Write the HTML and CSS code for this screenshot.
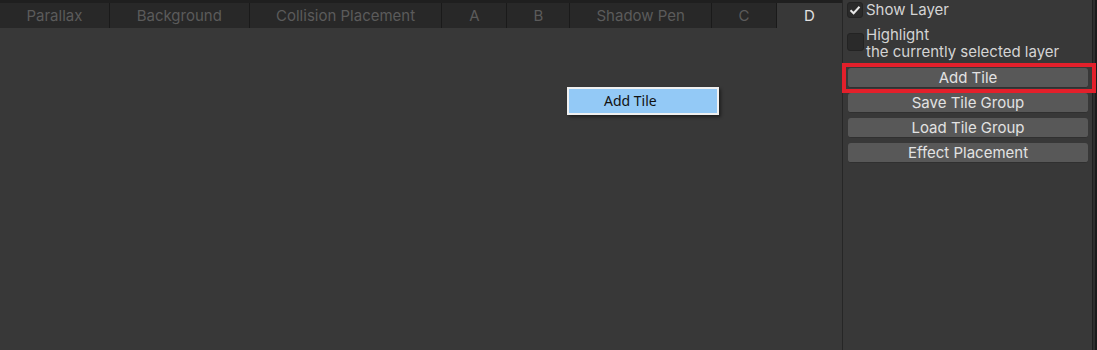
FILE: index.html
```html
<!DOCTYPE html>
<html>
<head>
	<title>Tile Editor</title>
	<link rel="stylesheet" href="styles.css">
</head>
<body>
<div class="window">
	<div class="main">
		<div class="tabs">
			<span class="tab w109">Parallax</span>
			<span class="tab w140">Background</span>
			<span class="tab w193">Collision Placement</span>
			<span class="tab w66">A</span>
			<span class="tab w63">B</span>
			<span class="tab w142">Shadow Pen</span>
			<span class="tab w65">C</span>
			<span class="tab w65 on">D</span>
		</div>
		<div class="canvas">
			<div class="menu">
				<div class="menu-item">Add Tile</div>
			</div>
		</div>
	</div>
	<div class="side">
		<label class="check">
			<span class="box"><svg width="12" height="10" viewBox="0 0 12 10"><path d="M1.5 5.2 L4.6 8.2 L10.5 1.8" fill="none" stroke="#e8e8e8" stroke-width="2"/></svg></span>
			<span class="label">Show Layer</span>
		</label>
		<label class="check two">
			<span class="box"></span>
			<span class="label">Highlight<br>the currently selected layer</span>
		</label>
		<div class="buttons">
			<div class="btn mark">Add Tile</div>
			<div class="btn">Save Tile Group</div>
			<div class="btn">Load Tile Group</div>
			<div class="btn">Effect Placement</div>
		</div>
	</div>
	<div class="edge"></div>
</div>
</body>
</html>
```
FILE: styles.css
```css
*{margin: 0;padding: 0;box-sizing: border-box;}
body{background: #383838;font-family: Inter, "Noto Sans", sans-serif;font-size: 15px;overflow: hidden;}
.window{display: flex;height: 350px;}
.main{width: 843px;display: flex;flex-direction: column;border-right: 1px solid #262626;}
.tabs{display: flex;height: 28px;border-top: 3px solid #1f1f1f;background: #282828;}
.tab{height: 25px;line-height: 25px;text-align: center;color: #5b5b5b;border-right: 1px solid #1a1a1a;}
.tab.on{background: #383838;color: #e2e2e2;border-right: none;}
.w109{width: 110px;}
.w140{width: 140px;}
.w193{width: 193px;}
.w66{width: 65px;}
.w63{width: 63px;}
.w142{width: 142px;}
.w65{width: 65px;}
.canvas{flex: 1;position: relative;}
.menu{position: absolute;left: 567px;top: 59px;width: 152px;padding: 2px;background: #f0f0f0;box-shadow: 2px 2px 3px rgba(0,0,0,.45);}
.menu-item{height: 24px;line-height: 24px;padding-left: 35px;background: #93c9f6;color: #111;font-family: "Noto Sans", sans-serif;font-size: 14px;}
.side{width: 249px;display: flex;flex-direction: column;padding-top: 1px;}
.check{display: flex;align-items: flex-start;padding-left: 4px;color: #d4d4d4;line-height: 17px;}
.check .box{width: 16px;height: 16px;margin: 1px 3px 0 0;border-radius: 3px;background: #2a2a2a;border: 1px solid #232323;display: flex;align-items: center;justify-content: center;}
.check.two{margin-top: 8px;}
.check.two .box{width: 17px;height: 18px;margin: 7px 2px 0 0;}
.buttons{display: flex;flex-direction: column;gap: 5px;margin-top: 8px;}
.btn{height: 20px;line-height: 20px;margin: 0 4px 0 5px;text-align: center;color: #e2e2e2;background: #585858;border-radius: 3px;border-bottom: 1px solid #303030;}
.mark{position: relative;}
.mark::after{content: "";position: absolute;z-index: 2;left: -6px;right: -8px;top: -5px;bottom: -6px;border: 4px solid #e3202b;}
.edge{width: 5px;background: #2e2e2e;border-left: 1px solid #1f1f1f;border-right: 2px solid #1b1b1b;}
```
